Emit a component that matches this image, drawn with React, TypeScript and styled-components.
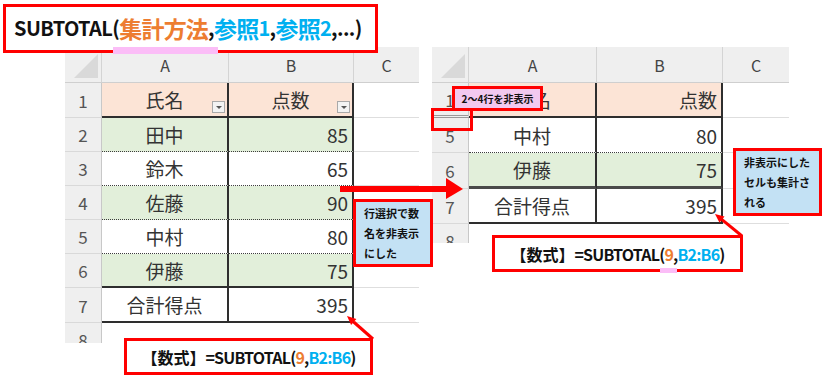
import React from 'react';
import styled, { createGlobalStyle, css } from 'styled-components';

const GlobalStyle = createGlobalStyle`
  html, body { margin: 0; padding: 0; background: #fff; }
  body { font-family: "Noto Sans CJK JP", "Noto Sans", sans-serif; }
  *, *::before, *::after { box-sizing: border-box; }
`;

type Line = 'dotted' | 'thick' | 'heavy' | 'grid';
type Fill = 'head' | 'green' | 'plain';

interface RowData {
  label: string;
  name?: string;
  score?: string;
  fill?: Fill;
  line?: Line;
  h: number;
  filter?: boolean;
  hiddenBelow?: boolean;
}

const fills: Record<Fill, string> = {
  head: '#fce4d6',
  green: '#e2efda',
  plain: '#ffffff',
};

const lines: Record<Line, string> = {
  dotted: '1px dotted #3c3c3c',
  thick: '2px solid #2e2e2e',
  heavy: '3px solid #4a4a4a',
  grid: '1px solid #dcdcdc',
};

const Canvas = styled.div`
  position: relative;
  width: 831px;
  height: 377px;
  overflow: hidden;
  background: #fff;
`;

const SheetsRow = styled.div`
  display: flex;
  align-items: flex-start;
  gap: 13px;
  padding: 47px 0 0 65px;
`;

const SheetFrame = styled.div<{ $h: number }>`
  height: ${p => p.$h}px;
  overflow: hidden;
  font-family: "Noto Sans CJK JP", sans-serif;
`;

const SheetRow = styled.div<{ $cols: string; $h: number }>`
  display: grid;
  grid-template-columns: ${p => p.$cols};
  height: ${p => p.$h}px;
`;

const Corner = styled.div`
  position: relative;
  background: #efefef;
  border-right: 1px solid #d4d4d4;
  border-bottom: 1px solid #cfcfcf;
  &::after {
    content: '';
    position: absolute;
    right: 3px;
    bottom: 4px;
    width: 24px;
    height: 24px;
    background: #d9d9d9;
    clip-path: polygon(100% 0, 100% 100%, 0 100%);
  }
`;

const ColHead = styled.div<{ $last?: boolean }>`
  display: flex;
  align-items: center;
  justify-content: center;
  background: #efefef;
  color: #444;
  font-size: 16px;
  border-right: ${p => (p.$last ? 'none' : '1px solid #d4d4d4')};
  border-bottom: 1px solid #cfcfcf;
`;

const RowHead = styled.div<{ $hidden?: boolean }>`
  display: flex;
  align-items: center;
  justify-content: center;
  background: #efefef;
  color: #555;
  font-size: 17px;
  border-right: 1px solid #c8c8c8;
  border-bottom: ${p => (p.$hidden ? '3px double #9a9a9a' : '1px solid #d9d9d9')};
`;

const Cell = styled.div<{ $fill: Fill; $line: Line; $align: 'center' | 'right' }>`
  position: relative;
  display: flex;
  align-items: center;
  justify-content: ${p => (p.$align === 'right' ? 'flex-end' : 'center')};
  padding-right: ${p => (p.$align === 'right' ? '4px' : '0')};
  background: ${p => fills[p.$fill]};
  color: #333;
  font-size: 19px;
  border-right: 2px solid #2e2e2e;
  border-bottom: ${p => lines[p.$line]};
`;

const EmptyCell = styled.div`
  border-bottom: 1px solid #dedede;
`;

const FilterButton = styled.span`
  position: absolute;
  right: 2px;
  bottom: 3px;
  width: 13px;
  height: 12px;
  background: #f3f3f3;
  border: 1px solid #a9a9a9;
  &::after {
    content: '';
    position: absolute;
    left: 3px;
    top: 4px;
    border-left: 3px solid transparent;
    border-right: 3px solid transparent;
    border-top: 3px solid #555;
  }
`;

const Sheet: React.FC<{ cols: string; height: number; rows: RowData[] }> = ({ cols, height, rows }) => (
  <SheetFrame $h={height}>
    <SheetRow $cols={cols} $h={36}>
      <Corner />
      <ColHead>A</ColHead>
      <ColHead>B</ColHead>
      <ColHead $last>C</ColHead>
    </SheetRow>
    {rows.map(r => (
      <SheetRow key={r.label} $cols={cols} $h={r.h}>
        <RowHead $hidden={r.hiddenBelow}>{r.label}</RowHead>
        {r.fill ? (
          <>
            <Cell $fill={r.fill} $line={r.line || 'grid'} $align="center">
              {r.name}
              {r.filter && <FilterButton />}
            </Cell>
            <Cell $fill={r.fill} $line={r.line || 'grid'} $align={r.filter ? 'center' : 'right'}>
              {r.score}
              {r.filter && <FilterButton />}
            </Cell>
          </>
        ) : (
          <>
            <EmptyCell />
            <EmptyCell />
          </>
        )}
        <EmptyCell />
      </SheetRow>
    ))}
  </SheetFrame>
);

const leftRows: RowData[] = [
  { label: '1', name: '氏名', score: '点数', fill: 'head', line: 'thick', h: 35, filter: true },
  { label: '2', name: '田中', score: '85', fill: 'green', line: 'dotted', h: 34 },
  { label: '3', name: '鈴木', score: '65', fill: 'plain', line: 'dotted', h: 34 },
  { label: '4', name: '佐藤', score: '90', fill: 'green', line: 'dotted', h: 34 },
  { label: '5', name: '中村', score: '80', fill: 'plain', line: 'dotted', h: 34 },
  { label: '6', name: '伊藤', score: '75', fill: 'green', line: 'thick', h: 34 },
  { label: '7', name: '合計得点', score: '395', fill: 'plain', line: 'thick', h: 35 },
  { label: '8', h: 34 },
];

const rightRows: RowData[] = [
  { label: '1', name: '氏名', score: '点数', fill: 'head', line: 'thick', h: 35, hiddenBelow: true },
  { label: '5', name: '中村', score: '80', fill: 'plain', line: 'dotted', h: 35 },
  { label: '6', name: '伊藤', score: '75', fill: 'green', line: 'heavy', h: 36 },
  { label: '7', name: '合計得点', score: '395', fill: 'plain', line: 'thick', h: 35 },
  { label: '8', h: 34 },
];

const SyntaxBox = styled.div`
  position: absolute;
  left: 3px;
  top: 4px;
  width: 375px;
  height: 49px;
  border: 3px solid #ff0000;
  background: #fff;
  padding: 0 0 2px 8px;
  display: flex;
  align-items: center;
  font-weight: 700;
  font-size: 20px;
  letter-spacing: -0.6px;
  color: #111;
  white-space: nowrap;
`;

const Tok = styled.span<{ $c?: string; $big?: boolean }>`
  color: ${p => p.$c || 'inherit'};
  ${p =>
    p.$big &&
    css`
      font-size: 23px;
      letter-spacing: -0.8px;
    `}
`;

const Marked = styled.span`
  position: relative;
  &::after {
    content: '';
    position: absolute;
    left: -6px;
    right: -10px;
    bottom: -9px;
    height: 7px;
    background: #fbbdf7;
  }
`;

const FormulaBox = styled.div<{ $x: number; $y: number; $w: number }>`
  position: absolute;
  left: ${p => p.$x}px;
  top: ${p => p.$y}px;
  width: ${p => p.$w}px;
  height: 37px;
  border: 3px solid #ff0000;
  background: #fff;
  display: flex;
  align-items: center;
  justify-content: center;
  font-weight: 700;
  font-size: 16px;
  color: #111;
  white-space: nowrap;
`;

const Latin = styled.span`
  letter-spacing: -0.8px;
`;

const SmallMark = styled.span`
  position: relative;
  &::after {
    content: '';
    position: absolute;
    left: -4px;
    right: -4px;
    bottom: -7px;
    height: 5px;
    background: #fbbdf7;
  }
`;

const Callout = styled.div<{ $x: number; $y: number; $w: number; $h: number; $bg: string }>`
  position: absolute;
  left: ${p => p.$x}px;
  top: ${p => p.$y}px;
  width: ${p => p.$w}px;
  height: ${p => p.$h}px;
  border: 3px solid #ff0000;
  background: ${p => p.$bg};
  font-weight: 700;
  font-size: 11px;
  line-height: 20px;
  color: #111;
  padding: 1px 4px 0 8px;
  white-space: nowrap;
`;

const TagCallout = styled(Callout)`
  font-size: 10px;
  line-height: 19px;
  padding: 0;
  text-align: center;
`;

const Outline = styled.div<{ $x: number; $y: number; $w: number; $h: number }>`
  position: absolute;
  left: ${p => p.$x}px;
  top: ${p => p.$y}px;
  width: ${p => p.$w}px;
  height: ${p => p.$h}px;
  border: 3px solid #ff0000;
`;

const ArrowLayer = styled.svg`
  position: absolute;
  left: 0;
  top: 0;
  width: 831px;
  height: 377px;
  pointer-events: none;
`;

const ORANGE = '#ed7d31';
const BLUE = '#00b0f0';

const Formula: React.FC<{ mark?: boolean }> = ({ mark }) => (
  <span>
    【数式】
    <Latin>
      =SUBTOTAL(
      {mark ? (
        <SmallMark>
          <Tok $c={ORANGE}>9</Tok>
        </SmallMark>
      ) : (
        <Tok $c={ORANGE}>9</Tok>
      )}
      ,<Tok $c={BLUE}>B2:B6</Tok>)
    </Latin>
  </span>
);

export default function App() {
  return (
    <Canvas>
      <GlobalStyle />
      <SheetsRow>
        <Sheet cols="37px 127px 125px 65px" height={296} rows={leftRows} />
        <Sheet cols="37px 128px 126px 66px" height={196} rows={rightRows} />
      </SheetsRow>

      <SyntaxBox>
        SUBTOTAL(
        <Marked>
          <Tok $c={ORANGE} $big>
            集計方法
          </Tok>
        </Marked>
        ,<Tok $c={BLUE} $big>参照</Tok>
        <Tok $c={BLUE}>1</Tok>,<Tok $c={BLUE} $big>参照</Tok>
        <Tok $c={BLUE}>2</Tok>,...)
      </SyntaxBox>

      <ArrowLayer viewBox="0 0 831 377">
        <rect x="340" y="186" width="108" height="6" fill="#ff0000" />
        <polygon points="446,178 463,189 446,199" fill="#ff0000" />
        <line x1="373" y1="339" x2="353.7" y2="322" stroke="#ff0000" strokeWidth="3" />
        <polygon points="347,316 356.4,319 351.1,325" fill="#ff0000" />
        <line x1="742" y1="236" x2="722" y2="219.7" stroke="#ff0000" strokeWidth="3" />
        <polygon points="715,214 724.5,216.6 719.5,222.8" fill="#ff0000" />
      </ArrowLayer>

      <FormulaBox $x={124} $y={338} $w={249}>
        <Formula />
      </FormulaBox>
      <FormulaBox $x={492} $y={235} $w={251}>
        <Formula mark />
      </FormulaBox>

      <Callout $x={353} $y={199} $w={80} $h={68} $bg="#c3e1f4">
        行選択で数
        <br />
        名を非表示
        <br />
        にした
      </Callout>
      <Callout $x={733} $y={148} $w={89} $h={68} $bg="#c3e1f4">
        非表示にした
        <br />
        セルも集計さ
        <br />
        れる
      </Callout>

      <Outline $x={431} $y={108} $w={42} $h={23} />
      <TagCallout $x={452} $y={86} $w={91} $h={25} $bg="#f2c9ef">
        2～4行を非表示
      </TagCallout>
    </Canvas>
  );
}
